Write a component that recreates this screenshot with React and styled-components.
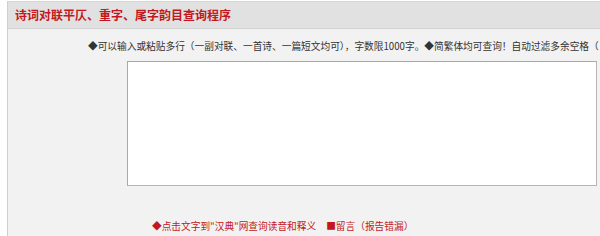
import React from "react"
import styled, { createGlobalStyle } from "styled-components"

const GlobalStyle = createGlobalStyle`
  html, body {
    margin: 0;
    padding: 0;
    background: #fff;
    overflow: hidden;
  }
  body {
    font-family: "Noto Sans CJK SC", "Liberation Sans", sans-serif;
  }
`

const Page = styled.div`
  width: 600px;
  height: 236px;
  padding-top: 1px;
  box-sizing: border-box;
  overflow: hidden;
`

const Panel = styled.section`
  margin-left: 7px;
  width: 640px;
  height: 235px;
  border-left: 1px solid #cfcfcf;
  border-top: 1px solid #d6d6d6;
  background: #f2f2f2;
  display: flex;
  flex-direction: column;
`

const Header = styled.div`
  height: 26px;
  display: flex;
  align-items: center;
  padding-left: 7px;
  background: #e1e1e1;
  border-bottom: 1px solid #d2d2d2;
  h1 {
    margin: 0;
    font-size: 12px;
    font-weight: 700;
    color: #c4161c;
    line-height: 14px;
  }
`

const Body = styled.div`
  display: flex;
  flex-direction: column;
  padding-top: 11px;
`

const Tip = styled.p`
  margin: 0 0 0 80px;
  font-size: 9.7px;
  line-height: 12px;
  color: #333;
  white-space: nowrap;
`

const Input = styled.textarea`
  display: block;
  margin: 9px 0 0 119px;
  width: 470px;
  height: 125px;
  box-sizing: border-box;
  border: 1px solid #a9a9a9;
  border-right-color: #b5b5b5;
  border-bottom-color: #b5b5b5;
  background: #fff;
  resize: none;
  outline: none;
`

const Links = styled.div`
  display: flex;
  gap: 10px;
  margin: 34px 0 0 144px;
`

const RedLink = styled.a`
  font-size: 9.7px;
  line-height: 12px;
  color: #c4161c;
  text-decoration: none;
  white-space: nowrap;
  cursor: pointer;
`

export default function App() {
  return (
    <>
      <GlobalStyle />
      <Page>
        <Panel>
          <Header>
            <h1>诗词对联平仄、重字、尾字韵目查询程序</h1>
          </Header>
          <Body>
            <Tip>
              ◆可以输入或粘贴多行（一副对联、一首诗、一篇短文均可），字数限1000字。◆简繁体均可查询！自动过滤多余空格（
            </Tip>
            <Input />
            <Links>
              <RedLink>◆点击文字到"汉典"网查询读音和释义</RedLink>
              <RedLink>■留言（报告错漏）</RedLink>
            </Links>
          </Body>
        </Panel>
      </Page>
    </>
  )
}
